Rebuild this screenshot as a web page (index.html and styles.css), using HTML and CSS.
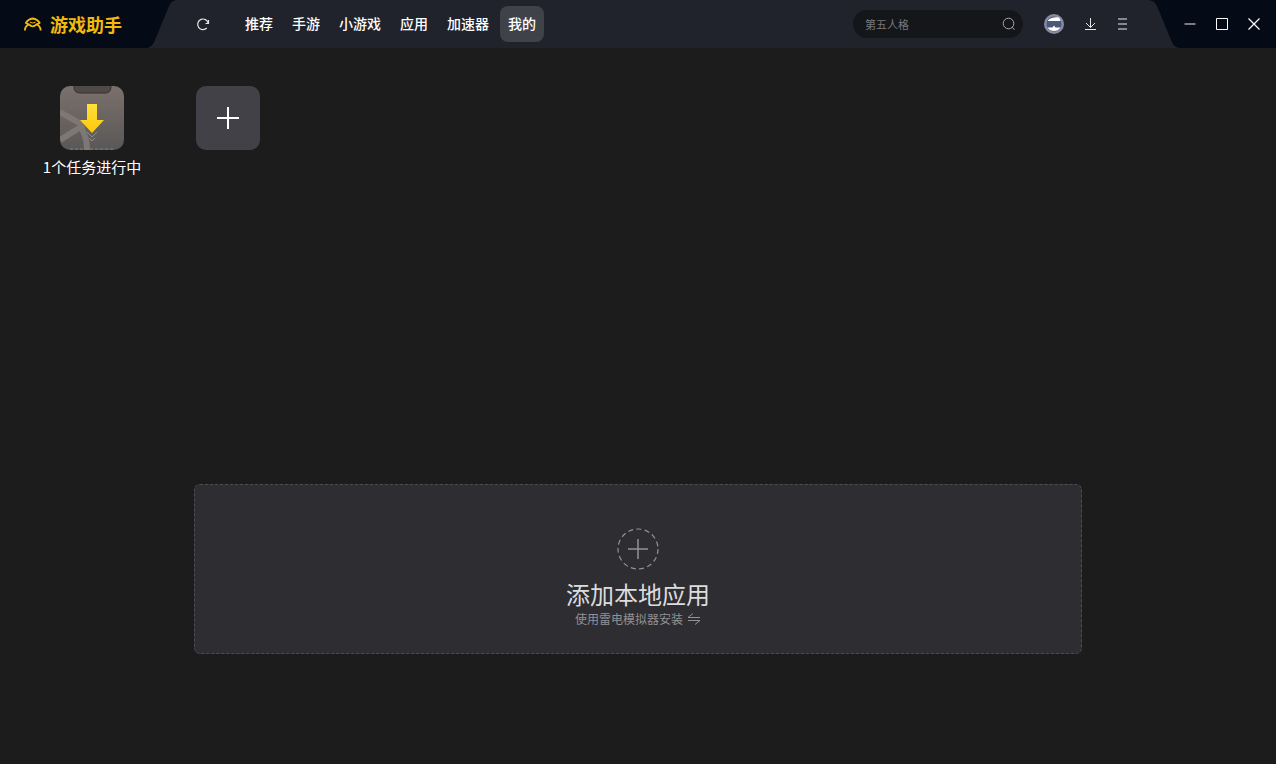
FILE: index.html
```html
<!DOCTYPE html>
<html lang="zh-CN">
<head>
    <meta charset="utf-8">
    <title>游戏助手</title>
    <link rel="stylesheet" href="styles.css">
</head>
<body>
    <header class="topbar">
        <div class="brand">
            <svg class="brand-logo" width="20" height="16" viewBox="0 0 20 16" fill="none" stroke="#f2ba0c" stroke-width="1.800">
                <path d="M1.800 14.500C2 11 3 9.500 6 8.300Q9.700 12.500 13.500 8.300C16.500 9.500 17.500 11 17.700 14.500"/>
                <path d="M2.500 7.500Q5 3 9.700 2.500Q14.500 3 17 7.500"/>
                <path d="M5.500 8.500L2.800 6.800M14 8.500L16.700 6.800"/>
                <path d="M7 6.200Q9.700 7.800 12.500 6.200" stroke-width="1"/>
            </svg>
            <span class="brand-name">游戏助手</span>
        </div>
        <svg class="edge" width="32" height="48" viewBox="0 0 32 48">
            <path d="M32 0H30Q24 0 21.500 5L7 40Q4 48 -2 48H32Z" fill="#20232c"/>
        </svg>
        <div class="toolbar">
            <button class="icon-btn" aria-label="刷新">
                <svg width="14" height="14" viewBox="0 0 14 14" fill="none" stroke="#e4e4e6" stroke-width="1.200">
                    <path d="M10.800 11A5.300 5.300 0 1 1 12.200 6.300"/>
                    <path d="M12.500 3V6.500H9.500"/>
                </svg>
            </button>
            <nav class="nav">
                <a href="#">推荐</a>
                <a href="#">手游</a>
                <a href="#">小游戏</a>
                <a href="#">应用</a>
                <a href="#">加速器</a>
                <a href="#" class="active">我的</a>
            </nav>
            <form class="search">
                <input type="text" placeholder="第五人格" aria-label="搜索">
                <button type="button" class="search-btn" aria-label="搜索">
                    <svg width="14" height="14" viewBox="0 0 14 14" fill="none" stroke="#a9aaad">
                        <circle cx="6.500" cy="6.500" r="5.300"/>
                        <path d="M10.300 10.300L12.500 12.800"/>
                    </svg>
                </button>
            </form>
            <button class="icon-btn avatar" aria-label="账号">
                <svg width="20" height="20" viewBox="0 0 20 20">
                    <circle cx="10" cy="10" r="10" fill="#858ca3"/>
                    <circle cx="10" cy="10" r="7.500" fill="#4c5878"/>
                    <path d="M4 6.500C5.500 4 10 3 14.500 3.200Q16.500 5 16.500 7L4 7Z" fill="#fff"/>
                    <path d="M3.500 13.500L8.500 13.500L10 11.500L11.500 13.500L16.500 13.500Q14 17 10 17T3.500 13.500Z" fill="#fff"/>
                </svg>
            </button>
            <button class="icon-btn" aria-label="下载">
                <svg width="14" height="14" viewBox="0 0 14 14" fill="none" stroke="#e4e4e6">
                    <path d="M7.500 1V10.500M3 6L7.500 10.500L12 6"/>
                    <path d="M2 12.500H13"/>
                </svg>
            </button>
            <button class="icon-btn" aria-label="菜单">
                <svg width="14" height="14" viewBox="0 0 14 14" fill="none" stroke="#a9abb0" stroke-width="1.500">
                    <path d="M3 2H12M3 7H12M3 12H12"/>
                </svg>
            </button>
        </div>
        <svg class="edge" width="32" height="48" viewBox="0 0 32 48">
            <path d="M0 0Q6 0 9 6L23 40Q26 48 32 48H0Z" fill="#20232c"/>
        </svg>
        <div class="window-controls">
            <button class="icon-btn" aria-label="最小化">
                <svg width="14" height="14" viewBox="0 0 14 14" stroke="#c4c5c8" stroke-width="1.200"><path d="M1.500 7H12.500"/></svg>
            </button>
            <button class="icon-btn" aria-label="最大化">
                <svg width="14" height="14" viewBox="0 0 14 14" fill="none" stroke="#fff"><path d="M1.500 1.500H12.500V12.500H1.500Z"/></svg>
            </button>
            <button class="icon-btn" aria-label="关闭">
                <svg width="14" height="14" viewBox="0 0 14 14" stroke="#fff" stroke-width="1.200"><path d="M1.500 1.500L12.500 12.500M12.500 1.500L1.500 12.500"/></svg>
            </button>
        </div>
    </header>

    <main class="content">
        <div class="apps">
            <button class="app">
                <svg width="64" height="64" viewBox="0 0 64 64">
                    <defs>
                        <linearGradient id="card" x1="0" y1="0" x2="0" y2="1">
                            <stop offset="0" stop-color="#7b706c"/>
                            <stop offset="1" stop-color="#595857"/>
                        </linearGradient>
                        <linearGradient id="arrow" x1="0" y1="0" x2="0" y2="1">
                            <stop offset="0" stop-color="#ffe03c"/>
                            <stop offset="1" stop-color="#ffc80a"/>
                        </linearGradient>
                        <clipPath id="round"><rect width="64" height="64" rx="10"/></clipPath>
                    </defs>
                    <g clip-path="url(#round)">
                        <rect width="64" height="64" fill="url(#card)"/>
                        <g fill="none" stroke="#7d7875" stroke-width="6">
                            <path d="M0 26L23 39"/>
                            <path d="M0 54L24 39"/>
                            <path d="M20 40Q27 50 27 64"/>
                        </g>
                        <path d="M14 -1V1Q14 7 20 7H45Q51 7 51 1V-1Z" fill="#4f4a48" stroke="#37312f"/>
                        <path d="M10 63H54" stroke="#85817f" stroke-dasharray="3 2"/>
                    </g>
                    <path d="M27 46L32 51L37 46M29 52L32 55L35 52" fill="none" stroke="#8f8b88"/>
                    <path d="M27 18H37V34H44L32 47L20 34H27Z" fill="url(#arrow)"/>
                </svg>
                <span class="app-name">1个任务进行中</span>
            </button>
            <button class="app" aria-label="添加">
                <svg width="64" height="64" viewBox="0 0 64 64">
                    <rect width="64" height="64" rx="10" fill="#434148"/>
                    <path d="M21 32H43M32 21V43" stroke="#fff" stroke-width="2"/>
                </svg>
            </button>
        </div>

        <button class="dropzone">
            <svg width="42" height="42" viewBox="0 0 42 42" fill="none" stroke="#929194">
                <circle cx="21" cy="21" r="20" stroke-dasharray="5 3.370" stroke-width="1.200"/>
                <path d="M11 21H31M21 11V31" stroke-width="1.500"/>
            </svg>
            <span class="dropzone-title">添加本地应用</span>
            <span class="dropzone-hint">
                使用雷电模拟器安装
                <svg width="14" height="12" viewBox="0 0 14 12" fill="none" stroke="#929194">
                    <path d="M6 .5L1 4.500H13"/>
                    <path d="M1 7.500H13L8 11.500"/>
                </svg>
            </span>
        </button>
    </main>
</body>
</html>
```
FILE: styles.css
```css
* {
    box-sizing: border-box;
}
body {
    margin: 0;
    min-height: 100vh;
    display: flex;
    flex-direction: column;
    background-color: #1c1c1c;
    color: #fff;
    font-family: "Noto Sans CJK SC", sans-serif;
}
button {
    margin: 0;
    padding: 0;
    border: 0;
    background: none;
    color: inherit;
    font-family: inherit;
    cursor: pointer;
}
svg {
    display: block;
    flex: none;
}

/* Top bar */
.topbar {
    display: flex;
    height: 48px;
    background-color: #050b16;
}
.brand {
    display: flex;
    align-items: center;
    gap: 7px;
    width: 148px;
    padding-left: 23px;
}
.brand-name {
    color: #f2ba0c;
    font-size: 18px;
    font-weight: bold;
    line-height: 24px;
}
.toolbar {
    flex: 1;
    display: flex;
    align-items: center;
    gap: 12px;
    padding: 0 16px 0 13px;
    background-color: #20232c;
}
.icon-btn {
    display: flex;
    align-items: center;
    justify-content: center;
    width: 20px;
    height: 20px;
}
.avatar {
    margin: 0 4px 0 9px;
}
.nav {
    display: flex;
    gap: 3px;
    margin-left: 12px;
    margin-right: auto;
}
.nav a {
    padding: 0 8px 2px;
    border-radius: 8px;
    color: #fff;
    font-size: 14px;
    font-weight: 500;
    line-height: 34px;
    text-decoration: none;
    white-space: nowrap;
}
.nav a.active {
    background-color: #40424a;
}
.search {
    display: flex;
    align-items: center;
    width: 170px;
    height: 28px;
    padding: 0 7px 0 12px;
    border-radius: 14px;
    background-color: #15161a;
}
.search input {
    flex: 1;
    min-width: 0;
    padding: 0;
    border: 0;
    outline: 0;
    background: none;
    color: #fff;
    font-family: inherit;
    font-size: 11px;
}
.search input::placeholder {
    color: #77787b;
}
.window-controls {
    display: flex;
    align-items: center;
    gap: 12px;
    padding-right: 12px;
}

/* App list */
.content {
    flex: 1;
    display: flex;
    flex-direction: column;
    padding: 38px 24px 110px;
}
.apps {
    display: flex;
    flex-wrap: wrap;
}
.app {
    display: flex;
    flex-direction: column;
    align-items: center;
    gap: 6px;
    width: 136px;
}
.app-name {
    font-size: 15px;
    line-height: 22px;
    white-space: nowrap;
}

/* Install area */
.dropzone {
    display: flex;
    flex-direction: column;
    align-items: center;
    width: 100%;
    max-width: 888px;
    margin: auto auto 0;
    padding: 43px 0 25px;
    border: 1px dashed #4d4c51;
    border-radius: 6px;
    background-color: #2e2d32;
}
.dropzone-title {
    margin-top: 8px;
    color: #dcdcdd;
    font-size: 24px;
    line-height: 32px;
}
.dropzone-hint {
    display: flex;
    align-items: center;
    gap: 4px;
    color: #929194;
    font-size: 12px;
    line-height: 18px;
}
```
